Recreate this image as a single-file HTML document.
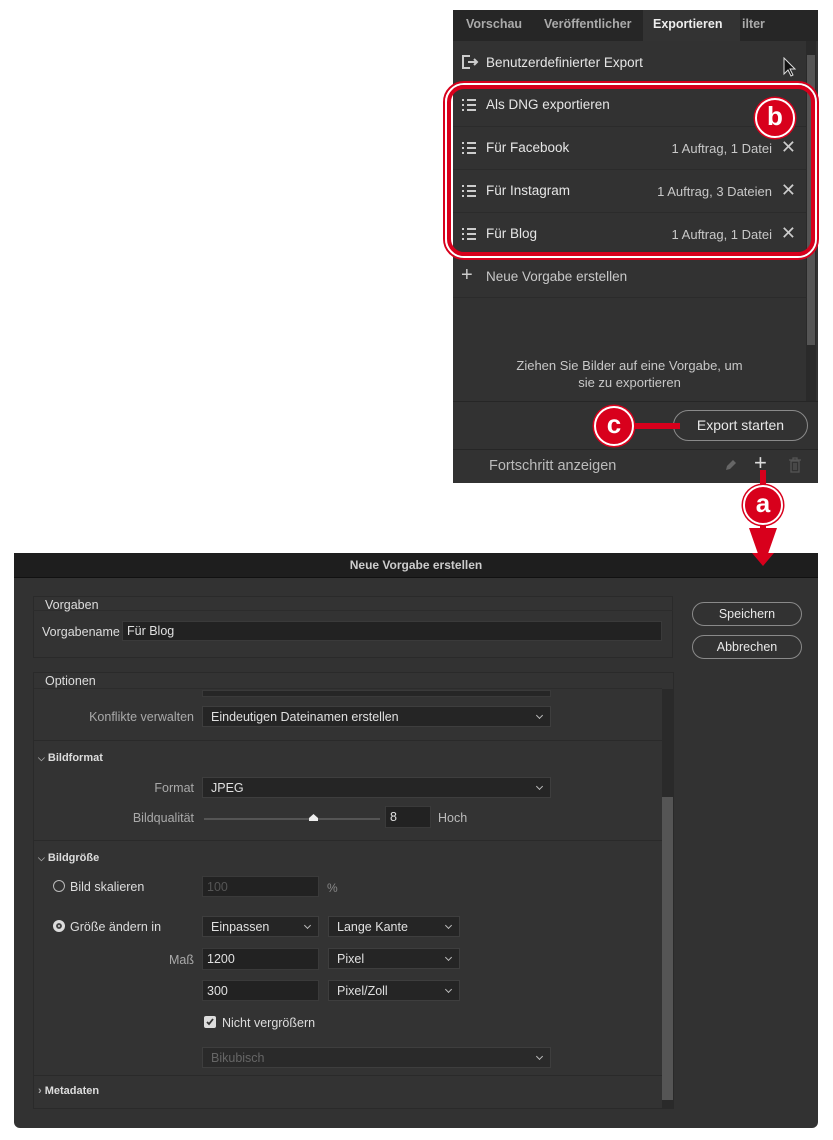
<!DOCTYPE html>
<html><head><meta charset="utf-8"><style>
*{box-sizing:border-box;margin:0;padding:0}
body{width:833px;height:1140px;background:#fff;position:relative;overflow:hidden;font-family:"Liberation Sans",sans-serif;color:#d8d8d8}
.a{position:absolute}
.t{position:absolute;white-space:nowrap}
.sel{position:absolute;background:#252525;border:1px solid #3e3e3e;height:21px;font-size:12.5px;color:#e0e0e0;padding:3px 8px}
.sel:after{content:"";position:absolute;right:8px;top:6px;width:4px;height:4px;border-right:1px solid #bbb;border-bottom:1px solid #bbb;transform:rotate(45deg)}
.inp{position:absolute;background:#222;border:1px solid #3a3a3a;height:21px;font-size:12.5px;color:#e0e0e0;padding:3px 4px}
.lbl{position:absolute;font-size:12.5px;color:#aaa;text-align:right;white-space:nowrap}
.row{position:absolute;left:453px;width:353px;height:43px;border-bottom:1px solid #2b2b2b}
.row .n{position:absolute;left:33px;top:13px;font-size:13.5px;color:#e6e6e6}
.row .i{position:absolute;right:34px;top:14px;font-size:13px;color:#c8c8c8}
.row .x{position:absolute;right:10px;top:10px;font-size:18px;color:#ccc}
.li{position:absolute;left:9px;top:15px;width:14px;height:12px}
.li i{position:absolute;left:0;width:14px;height:2px;border-left:2px solid #ccc;background:linear-gradient(90deg,transparent 3px,#ccc 3px)}
.badge{position:absolute;width:40px;height:40px;border-radius:50%;background:#d8001c;border:2.5px solid #fff;color:#fff;font-weight:bold;font-size:26px;text-align:center;line-height:33px;box-shadow:0 0 0 1.5px #d8001c}
.btn{position:absolute;border:1px solid #8a8a8a;border-radius:13px;font-size:12.5px;color:#e8e8e8;text-align:center}
</style></head><body>

<div class="a" style="left:453px;top:10px;width:365px;height:473px;background:#323232"></div>
<div class="a" style="left:453px;top:10px;width:365px;height:31px;background:#262626"></div>
<div class="a" style="left:643px;top:10px;width:97px;height:31px;background:#333"></div>
<div class="t" style="left:466px;top:17px;font-size:12.5px;font-weight:bold;color:#aaa">Vorschau</div>
<div class="t" style="left:544px;top:17px;font-size:12.5px;font-weight:bold;color:#aaa">Veröffentlicher</div>
<div class="t" style="left:653px;top:17px;font-size:12.5px;font-weight:bold;color:#eee">Exportieren</div>
<div class="t" style="left:742px;top:17px;font-size:12.5px;font-weight:bold;color:#aaa">ilter</div>
<div class="a" style="left:806px;top:41px;width:10px;height:360px;background:#2a2a2a"></div>
<div class="a" style="left:807px;top:55px;width:8px;height:290px;background:#555"></div>

<div class="row" style="top:41px;height:43px">
<svg class="a" style="left:8px;top:13px" width="18" height="16" viewBox="0 0 18 16"><path d="M9 2H2v12h7M7 8h9M13 5l3 3-3 3" fill="none" stroke="#ccc" stroke-width="2"/></svg>
<div class="n" style="top:14px">Benutzerdefinierter Export</div></div>
<svg class="a" style="left:783px;top:57px" width="14" height="22" viewBox="0 0 14 22"><path d="M1 1v16l4-4 3 6 2-1-3-6h5z" fill="#111" stroke="#ddd" stroke-width="1"/></svg>

<div class="row" style="top:84px"><div class="li"><i style="top:0"></i><i style="top:5px"></i><i style="top:10px"></i></div><div class="n">Als DNG exportieren</div></div>
<div class="row" style="top:127px"><div class="li"><i style="top:0"></i><i style="top:5px"></i><i style="top:10px"></i></div><div class="n">Für Facebook</div><div class="i">1 Auftrag, 1 Datei</div><div class="x">✕</div></div>
<div class="row" style="top:170px"><div class="li"><i style="top:0"></i><i style="top:5px"></i><i style="top:10px"></i></div><div class="n">Für Instagram</div><div class="i">1 Auftrag, 3 Dateien</div><div class="x">✕</div></div>
<div class="row" style="top:213px"><div class="li"><i style="top:0"></i><i style="top:5px"></i><i style="top:10px"></i></div><div class="n">Für Blog</div><div class="i">1 Auftrag, 1 Datei</div><div class="x">✕</div></div>
<div class="row" style="top:256px;height:42px"><div class="t" style="left:8px;top:8px;font-size:20px;color:#ccc">+</div><div class="n" style="color:#c8c8c8">Neue Vorgabe erstellen</div></div>

<div class="t" style="left:453px;width:353px;top:357px;text-align:center;font-size:13px;line-height:17px;color:#c8c8c8">Ziehen Sie Bilder auf eine Vorgabe, um<br>sie zu exportieren</div>
<div class="a" style="left:453px;top:401px;width:365px;height:1px;background:#262626"></div>
<div class="a" style="left:453px;top:449px;width:365px;height:1px;background:#262626"></div>
<div class="btn" style="left:673px;top:410px;width:135px;height:31px;border-radius:16px;line-height:29px;font-size:14px">Export starten</div>
<div class="t" style="left:489px;top:458px;font-size:14.5px;color:#bbb">Fortschritt anzeigen</div>
<svg class="a" style="left:724px;top:458px" width="14" height="14" viewBox="0 0 14 14"><path d="M2 12l1-4 6-6 3 3-6 6z" fill="#666"/></svg>
<div class="t" style="left:754px;top:450px;font-size:22px;color:#ddd">+</div>
<svg class="a" style="left:788px;top:457px" width="14" height="16" viewBox="0 0 14 16"><path d="M1 3h12M5 3V1h4v2M3 4h8v11H3zM6 6v7M8 6v7" fill="none" stroke="#555" stroke-width="1.3"/></svg>

<div class="a" style="left:443px;top:81px;width:376px;height:179px;border:2px solid #d8001c;border-radius:21px"></div>
<div class="a" style="left:445px;top:83px;width:372px;height:175px;border:2.5px solid #fff;border-radius:19px"></div>
<div class="a" style="left:447px;top:85px;width:368px;height:171px;border:4px solid #d8001c;border-radius:17px"></div>
<div class="badge" style="left:755px;top:98px">b</div>
<div class="a" style="left:632px;top:423px;width:48px;height:6px;background:#d8001c"></div>
<div class="badge" style="left:594px;top:406px">c</div>
<div class="a" style="left:760px;top:470px;width:6px;height:60px;background:#d8001c"></div>
<div class="badge" style="left:743px;top:485px">a</div>
<svg class="a" style="left:749px;top:528px" width="28" height="40" viewBox="0 0 28 40"><path d="M0 0h28L14 40z" fill="#d8001c"/></svg>

<div class="a" style="left:14px;top:553px;width:804px;height:575px;background:#323232;border-radius:0 0 6px 6px"></div>
<div class="a" style="left:14px;top:553px;width:804px;height:25px;background:#1e1e1e;border-bottom:1px solid #111"></div>
<div class="t" style="left:14px;width:804px;top:558px;text-align:center;font-size:12px;font-weight:bold;color:#ccc">Neue Vorgabe erstellen</div>
<svg class="a" style="left:749px;top:553px" width="28" height="14" viewBox="0 0 28 14"><path d="M3 0h22L14 13z" fill="#d8001c"/></svg>

<div class="a" style="left:33px;top:596px;width:640px;height:62px;border:1px solid #2a2a2a;background:#333"></div>
<div class="a" style="left:33px;top:610px;width:640px;height:1px;background:#2c2c2c"></div>
<div class="t" style="left:45px;top:598px;font-size:12.5px;color:#ddd">Vorgaben</div>
<div class="t" style="left:42px;top:625px;font-size:12.5px;color:#ddd">Vorgabename</div>
<div class="inp" style="left:122px;top:621px;width:540px;height:20px;padding-top:2px;font-size:12.5px">Für Blog</div>
<div class="btn" style="left:692px;top:602px;width:110px;height:24px;line-height:22px">Speichern</div>
<div class="btn" style="left:692px;top:635px;width:110px;height:24px;line-height:22px">Abbrechen</div>

<div class="a" style="left:33px;top:672px;width:641px;height:437px;border:1px solid #2a2a2a;background:#333"></div>
<div class="t" style="left:45px;top:674px;font-size:12.5px;color:#ddd">Optionen</div>
<div class="a" style="left:34px;top:688px;width:628px;height:1px;background:#2c2c2c"></div>
<div class="a" style="left:662px;top:689px;width:11px;height:419px;background:#2a2a2a"></div>
<div class="a" style="left:662px;top:797px;width:11px;height:303px;background:#555"></div>

<div class="a" style="left:202px;top:690px;width:349px;height:7px;background:#262626;border:1px solid #3a3a3a"></div>
<div class="lbl" style="left:60px;width:134px;top:710px">Konflikte verwalten</div>
<div class="sel" style="left:202px;top:706px;width:349px">Eindeutigen Dateinamen erstellen</div>
<div class="a" style="left:34px;top:740px;width:628px;height:1px;background:#2a2a2a"></div>
<div class="t" style="left:38px;top:752px;font-size:11px;font-weight:bold;color:#ddd"><span style="font-size:9px;color:#aaa">⌵</span> Bildformat</div>
<div class="lbl" style="left:60px;width:134px;top:781px">Format</div>
<div class="sel" style="left:202px;top:777px;width:349px">JPEG</div>
<div class="lbl" style="left:60px;width:134px;top:811px">Bildqualität</div>
<div class="a" style="left:204px;top:818px;width:176px;height:2px;background:#555"></div>
<svg class="a" style="left:309px;top:813px" width="9" height="8" viewBox="0 0 9 8"><path d="M0 8V5L4.5 1 9 5v3z" fill="#eee"/></svg>
<div class="inp" style="left:385px;top:806px;width:46px;height:22px">8</div>
<div class="t" style="left:438px;top:811px;font-size:12.5px;color:#bbb">Hoch</div>
<div class="a" style="left:34px;top:840px;width:628px;height:1px;background:#2a2a2a"></div>

<div class="t" style="left:38px;top:852px;font-size:11px;font-weight:bold;color:#ddd"><span style="font-size:9px;color:#aaa">⌵</span> Bildgröße</div>
<div class="a" style="left:53px;top:880px;width:12px;height:12px;border:1px solid #bbb;border-radius:50%"></div>
<div class="t" style="left:70px;top:880px;font-size:12.5px;color:#ddd">Bild skalieren</div>
<div class="inp" style="left:202px;top:876px;width:117px;color:#555">100</div>
<div class="t" style="left:327px;top:881px;font-size:12px;color:#888">%</div>
<div class="a" style="left:53px;top:920px;width:12px;height:12px;border-radius:50%;background:#ddd;border:3.5px solid #ddd;box-shadow:inset 0 0 0 2px #444"></div>
<div class="t" style="left:70px;top:920px;font-size:12.5px;color:#ddd">Größe ändern in</div>
<div class="sel" style="left:202px;top:916px;width:117px">Einpassen</div>
<div class="sel" style="left:328px;top:916px;width:132px">Lange Kante</div>
<div class="lbl" style="left:120px;width:74px;top:953px">Maß</div>
<div class="inp" style="left:202px;top:948px;width:117px;height:22px">1200</div>
<div class="sel" style="left:328px;top:948px;width:132px">Pixel</div>
<div class="inp" style="left:202px;top:980px;width:117px;height:21px">300</div>
<div class="sel" style="left:328px;top:980px;width:132px">Pixel/Zoll</div>
<div class="a" style="left:204px;top:1016px;width:12px;height:12px;background:#ddd;border-radius:2px"></div>
<svg class="a" style="left:205px;top:1017px" width="10" height="10" viewBox="0 0 10 10"><path d="M2 5l2 2 4-5" fill="none" stroke="#333" stroke-width="1.8"/></svg>
<div class="t" style="left:222px;top:1016px;font-size:12.5px;color:#ddd">Nicht vergrößern</div>
<div class="sel" style="left:202px;top:1047px;width:349px;color:#666;background:#2a2a2a">Bikubisch</div>
<div class="a" style="left:34px;top:1075px;width:628px;height:1px;background:#2a2a2a"></div>
<div class="t" style="left:38px;top:1085px;font-size:11px;font-weight:bold;color:#ddd"><span style="color:#aaa">›</span> Metadaten</div>
</body></html>
